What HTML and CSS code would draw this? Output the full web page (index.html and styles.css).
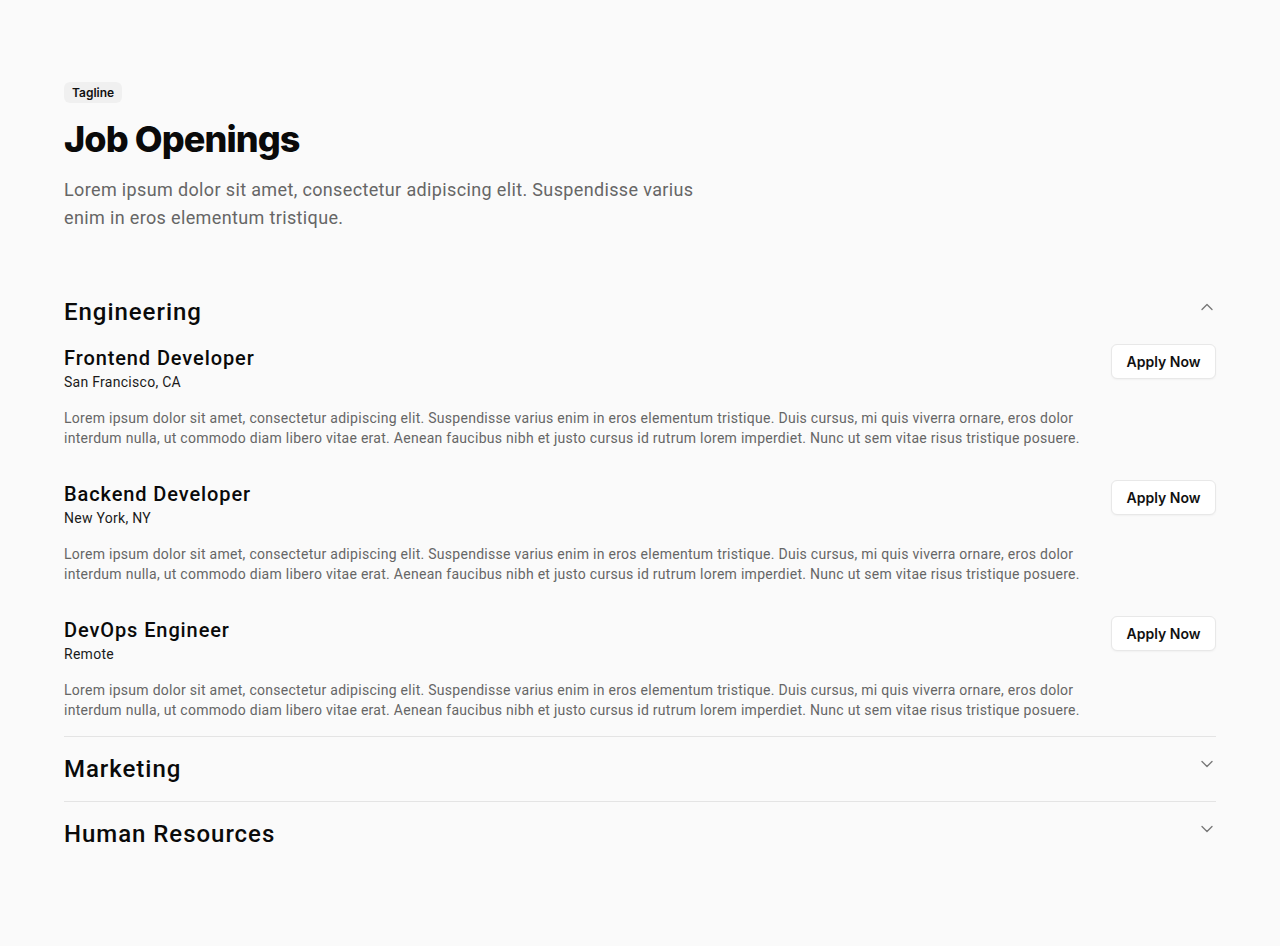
FILE: index.html
```html
<!DOCTYPE html>
<html lang="en">
<head>
<meta charset="utf-8">
<title>Job Openings</title>
<link rel="stylesheet" href="styles.css">
</head>
<body>
<main class="page">
  <header class="intro">
    <span class="tagline">Tagline</span>
    <h1 class="title">Job Openings</h1>
    <p class="lead">Lorem ipsum dolor sit amet, consectetur adipiscing elit. Suspendisse varius enim in eros elementum tristique.</p>
  </header>

  <section class="dept open">
    <div class="dept-head">
      <h2 class="dept-name">Engineering</h2>
      <svg class="chev" viewBox="0 0 24 24" width="20" height="20" fill="none" stroke="currentColor" stroke-width="1.6" stroke-linecap="round" stroke-linejoin="round"><path d="m6 15 6-6 6 6"/></svg>
    </div>
    <div class="jobs">
      <article class="job">
        <div class="job-main">
          <h3 class="job-title">Frontend Developer</h3>
          <p class="job-loc">San Francisco, CA</p>
          <p class="job-desc">Lorem ipsum dolor sit amet, consectetur adipiscing elit. Suspendisse varius enim in eros elementum tristique. Duis cursus, mi quis viverra ornare, eros dolor interdum nulla, ut commodo diam libero vitae erat. Aenean faucibus nibh et justo cursus id rutrum lorem imperdiet. Nunc ut sem vitae risus tristique posuere.</p>
        </div>
        <button class="apply">Apply Now</button>
      </article>
      <article class="job">
        <div class="job-main">
          <h3 class="job-title">Backend Developer</h3>
          <p class="job-loc">New York, NY</p>
          <p class="job-desc">Lorem ipsum dolor sit amet, consectetur adipiscing elit. Suspendisse varius enim in eros elementum tristique. Duis cursus, mi quis viverra ornare, eros dolor interdum nulla, ut commodo diam libero vitae erat. Aenean faucibus nibh et justo cursus id rutrum lorem imperdiet. Nunc ut sem vitae risus tristique posuere.</p>
        </div>
        <button class="apply">Apply Now</button>
      </article>
      <article class="job">
        <div class="job-main">
          <h3 class="job-title">DevOps Engineer</h3>
          <p class="job-loc">Remote</p>
          <p class="job-desc">Lorem ipsum dolor sit amet, consectetur adipiscing elit. Suspendisse varius enim in eros elementum tristique. Duis cursus, mi quis viverra ornare, eros dolor interdum nulla, ut commodo diam libero vitae erat. Aenean faucibus nibh et justo cursus id rutrum lorem imperdiet. Nunc ut sem vitae risus tristique posuere.</p>
        </div>
        <button class="apply">Apply Now</button>
      </article>
    </div>
  </section>

  <section class="dept">
    <div class="dept-head">
      <h2 class="dept-name">Marketing</h2>
      <svg class="chev" viewBox="0 0 24 24" width="20" height="20" fill="none" stroke="currentColor" stroke-width="1.6" stroke-linecap="round" stroke-linejoin="round"><path d="m6 9 6 6 6-6"/></svg>
    </div>
  </section>

  <section class="dept">
    <div class="dept-head">
      <h2 class="dept-name">Human Resources</h2>
      <svg class="chev" viewBox="0 0 24 24" width="20" height="20" fill="none" stroke="currentColor" stroke-width="1.6" stroke-linecap="round" stroke-linejoin="round"><path d="m6 9 6 6 6-6"/></svg>
    </div>
  </section>
</main>
</body>
</html>
```

FILE: styles.css
```css
* { box-sizing: border-box; }

html, body {
  margin: 0;
  padding: 0;
  background: #fafafa;
}

body {
  font-family: Roboto, "Liberation Sans", sans-serif;
  color: #0a0a0a;
}

.page {
  padding: 82px 64px 64px;
}

.intro {
  display: flex;
  flex-direction: column;
  align-items: flex-start;
  margin-bottom: 48px;
}

.tagline {
  font-family: Inter, sans-serif;
  font-size: 12px;
  font-weight: 600;
  line-height: 16px;
  color: #111;
  background: #f0f0f0;
  border-radius: 6px;
  padding: 3px 8px 2px;
}

.title {
  font-family: Inter, sans-serif;
  font-weight: 800;
  font-size: 36px;
  line-height: 44px;
  letter-spacing: -0.9px;
  margin: 14px 0 15px;
  color: #0a0a0a;
}

.lead {
  margin: 0;
  max-width: 660px;
  font-size: 18px;
  line-height: 28px;
  letter-spacing: 0.02em;
  color: #666;
}

.dept + .dept {
  border-top: 1px solid #e4e4e4;
}

.dept-head {
  display: flex;
  justify-content: space-between;
  align-items: flex-start;
  padding: 16px 0;
}

.dept-name {
  margin: 0;
  font-size: 24px;
  line-height: 32px;
  font-weight: 500;
  letter-spacing: 0.04em;
  color: #0a0a0a;
}

.chev {
  color: #777;
  margin-top: 1px;
  margin-right: -1px;
}

.jobs {
  display: flex;
  flex-direction: column;
  gap: 32px;
  padding: 0 0 16px;
}

.job {
  display: flex;
  justify-content: space-between;
  align-items: flex-start;
  gap: 24px;
}

.job-main {
  flex: 1;
}

.job-title {
  margin: 0;
  font-size: 20px;
  line-height: 28px;
  font-weight: 500;
  letter-spacing: 0.045em;
  color: #0a0a0a;
}

.job-loc {
  margin: 0 0 16px;
  font-size: 14px;
  line-height: 20px;
  letter-spacing: 0.02em;
  color: #1a1a1a;
}

.job-desc {
  margin: 0;
  font-size: 14px;
  line-height: 20px;
  letter-spacing: 0.02em;
  color: #666;
}

.apply {
  flex: none;
  width: 105px;
  height: 35px;
  font-family: Inter, sans-serif;
  font-size: 14px;
  font-weight: 600;
  color: #111;
  background: #fff;
  border: 1px solid #e8e8e8;
  border-radius: 6px;
  box-shadow: 0 1px 2px rgba(0,0,0,0.04);
  cursor: pointer;
}
```
